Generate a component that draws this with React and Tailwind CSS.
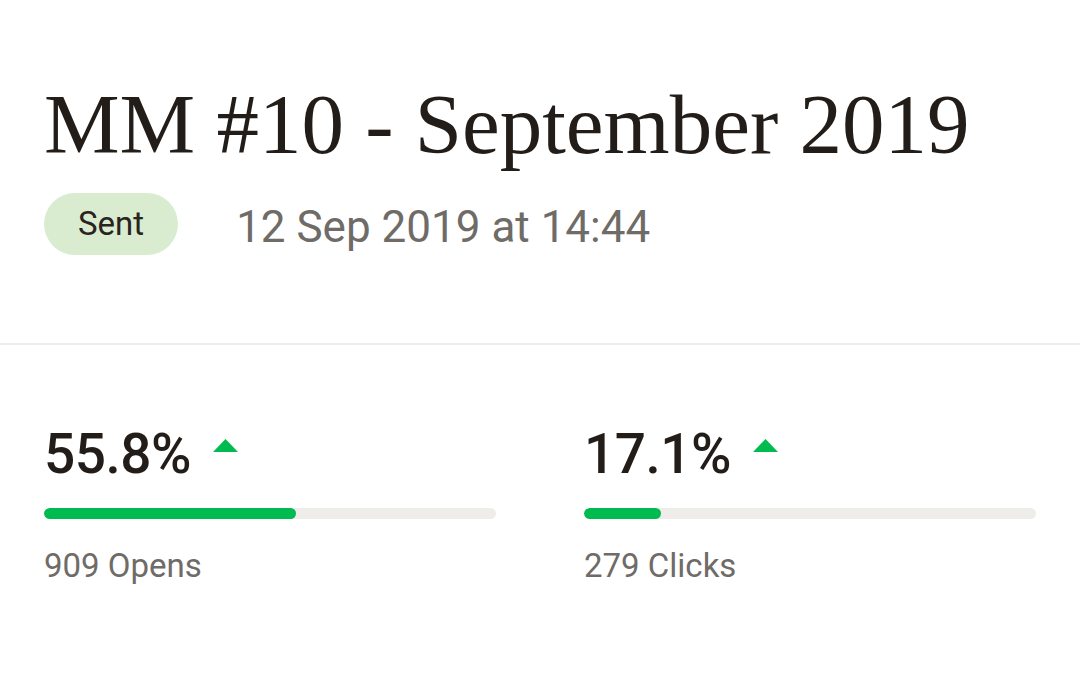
import React from "react";

const stats = [
  { value: "55.8%", pct: 55.8, label: "909 Opens" },
  { value: "17.1%", pct: 17.1, label: "279 Clicks" },
];

const StatBlock = ({ stat }) => (
  <div className="w-[452px]">
    <div className="flex items-start">
      <span className="text-[55px] leading-none font-medium text-[#231d19] tracking-[-0.5px]">
        {stat.value}
      </span>
      <svg className="ml-[22px] mt-[12px]" width="25" height="13" viewBox="0 0 25 13">
        <path d="M12.5 0 L25 13 L0 13 Z" fill="#00bb4f" />
      </svg>
    </div>
    <div className="mt-[26px] h-[11px] w-full rounded-full bg-[#efedea] overflow-hidden">
      <div className="h-full rounded-full bg-[#00bb4f]" style={{ width: `${stat.pct}%` }} />
    </div>
    <div className="mt-[30px] text-[33px] leading-none text-[#6f6b67]">{stat.label}</div>
  </div>
);

export default function App() {
  return (
    <div className="w-[1080px] h-[674px] bg-white overflow-hidden font-['Roboto',sans-serif]">
      {/* Header */}
      <div className="pl-[44px] pt-[82px]">
        <h1 className="font-['Liberation_Serif',serif] text-[85px] leading-none text-[#231d19] whitespace-nowrap">
          MM #10 - September 2019
        </h1>
        <div className="mt-[26px] h-[62px] flex items-start">
          <span className="h-[62px] px-[34px] flex items-center rounded-full bg-[#d9ecd0] text-[33px] text-[#2a2420]">
            Sent
          </span>
          <span className="ml-[58px] mt-[12px] text-[44px] leading-none text-[#6f6b67]">
            12 Sep 2019 at 14:44
          </span>
        </div>
      </div>

      <div className="mt-[88px] h-[2px] bg-[#eeede9]" />

      {/* Stats */}
      <div className="pl-[44px] pt-[82px] flex gap-[88px]">
        {stats.map((s) => (
          <StatBlock key={s.label} stat={s} />
        ))}
      </div>
    </div>
  );
}
